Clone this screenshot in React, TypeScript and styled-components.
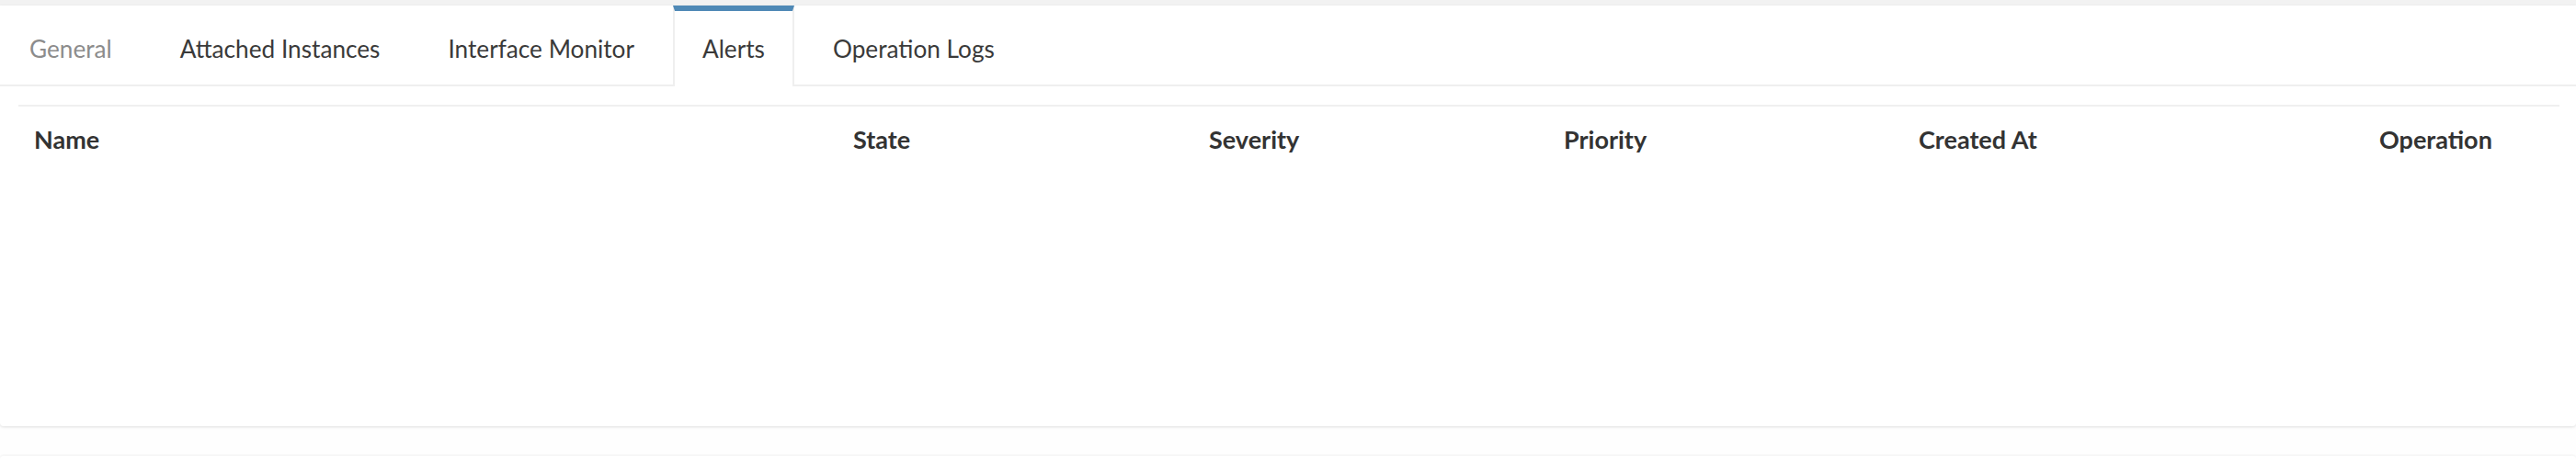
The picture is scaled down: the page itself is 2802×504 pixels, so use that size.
import React from "react";
import styled, { createGlobalStyle, css } from "styled-components";

const GlobalStyle = createGlobalStyle`
  html, body {
    margin: 0;
    padding: 0;
    background: #fefefe;
    font-family: Lato, "Open Sans", "Liberation Sans", sans-serif;
  }
  * { box-sizing: border-box; }
`;

const Page = styled.div`
  width: 2802px;
  display: flex;
  flex-direction: column;
`;

const TopStrip = styled.div`
  height: 6px;
  background: #f2f2f2;
`;

const Card = styled.section`
  background: #ffffff;
  border-radius: 0 0 4px 4px;
  box-shadow: 0 1px 3px rgba(0, 0, 0, 0.13);
  display: flex;
  flex-direction: column;
`;

const TabList = styled.nav`
  display: flex;
  align-items: flex-end;
  border-bottom: 2px solid #efefef;
  height: 88px;
`;

const Tab = styled.div<{ $active?: boolean; $muted?: boolean }>`
  margin-right: 10px;
  padding: 25px 30px 23px;
  border-top: 6px solid transparent;
  border-left: 2px solid transparent;
  border-right: 2px solid transparent;
  font-size: 26.2px;
  line-height: 32px;
  color: ${(p) => (p.$muted ? "#8c8c8c" : "#3a3a3a")};
  white-space: nowrap;
  background: #ffffff;
  ${(p) =>
    p.$active &&
    css`
      border-top-color: #4f89b6;
      border-left-color: #efefef;
      border-right-color: #efefef;
      margin-bottom: -2px;
      padding-bottom: 25px;
    `}
`;

const Content = styled.div`
  padding: 20px 18px 20px 20px;
  min-height: 370px;
`;

const HeaderRow = styled.div`
  display: grid;
  grid-template-columns: 891px 387px 386px 386px 501px 213px;
  border-top: 2px solid #f0f0f0;
`;

const HeadCell = styled.div`
  padding: 20px 17px 20px;
  font-size: 27px;
  line-height: 32px;
  font-weight: 700;
  color: #333333;
  white-space: nowrap;
`;

const NextCard = styled.div`
  margin-top: 32px;
  height: 8px;
  background: #ffffff;
  border-radius: 4px 4px 0 0;
  box-shadow: 0 -1px 2px rgba(0, 0, 0, 0.06);
`;

const tabs = [
  { label: "General", muted: true },
  { label: "Attached Instances" },
  { label: "Interface Monitor" },
  { label: "Alerts", active: true },
  { label: "Operation Logs" },
];

const columns = ["Name", "State", "Severity", "Priority", "Created At", "Operation"];

export default function App() {
  return (
    <Page>
      <GlobalStyle />
      <TopStrip />
      <Card>
        <TabList>
          {tabs.map((t) => (
            <Tab key={t.label} $active={t.active} $muted={t.muted}>
              {t.label}
            </Tab>
          ))}
        </TabList>
        <Content>
          <HeaderRow>
            {columns.map((c) => (
              <HeadCell key={c}>{c}</HeadCell>
            ))}
          </HeaderRow>
        </Content>
      </Card>
      <NextCard />
    </Page>
  );
}
